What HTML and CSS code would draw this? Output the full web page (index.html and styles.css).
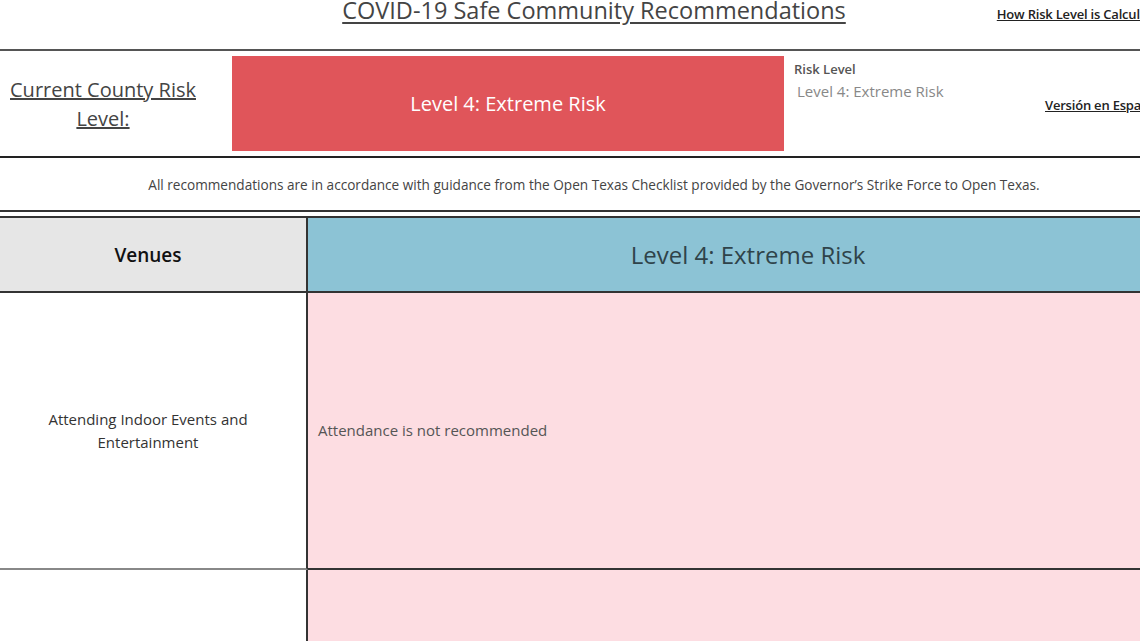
FILE: index.html
```html
<!DOCTYPE html>
<html lang="en">
<head>
  <meta charset="UTF-8" />
  <title>COVID-19 Safe Community Recommendations</title>
  <link rel="stylesheet" href="styles.css">
</head>
<body>
  <div class="dash">
    <div class="top">
      <div></div>
      <h1 class="title">COVID-19 Safe Community Recommendations</h1>
      <div class="top-right"><a href="#" class="small-link">How Risk Level is Calculated</a></div>
    </div>

    <div class="risk-row">
      <div class="risk-label"><a href="#">Current County Risk Level:</a></div>
      <div class="risk-box">Level 4: Extreme Risk</div>
      <div class="risk-info">
        <div class="info-title">Risk Level</div>
        <div class="info-value">Level 4: Extreme Risk</div>
      </div>
      <div class="lang"><a href="#" class="small-link">Versión en Español</a></div>
    </div>

    <p class="note">All recommendations are in accordance with guidance from the Open Texas Checklist provided by the Governor’s Strike Force to Open Texas.</p>

    <div class="table">
      <div class="head venues">Venues</div>
      <div class="head level">Level 4: Extreme Risk</div>

      <div class="cell name">Attending Indoor Events and<br>Entertainment</div>
      <div class="cell rec">Attendance is not recommended</div>

      <div class="cell name"></div>
      <div class="cell rec"></div>
    </div>
  </div>
</body>
</html>
```

FILE: styles.css
```css
* {
  margin: 0;
  padding: 0;
  box-sizing: border-box;
}

body {
  font-family: 'Open Sans', 'Noto Sans', sans-serif;
  background: #fff;
  color: #444;
  overflow: hidden;
}

.dash {
  width: 1188px;
}

.top {
  display: grid;
  grid-template-columns: 1fr auto 1fr;
  height: 51px;
  border-bottom: 2px solid #555;
}

.title {
  font-size: 23.5px;
  font-weight: 400;
  color: #444;
  text-decoration: underline;
  text-underline-offset: 3px;
  line-height: 22px;
  margin-top: -1px;
}

.top-right {
  padding-left: 151px;
  padding-top: 2px;
}

.small-link {
  font-size: 13px;
  font-weight: 600;
  color: #222;
  white-space: nowrap;
  text-decoration: underline;
  letter-spacing: -0.2px;
}

.risk-row {
  display: flex;
  height: 107px;
  border-bottom: 2px solid #222;
}

.risk-label {
  width: 232px;
  display: flex;
  align-items: center;
  justify-content: center;
  text-align: center;
  padding: 0 26px 0 0;
}

.risk-label a {
  font-size: 20px;
  line-height: 29px;
  color: #444;
  text-decoration: underline;
}

.risk-box {
  width: 552px;
  height: 95px;
  margin-top: 5px;
  background: #e0555a;
  color: #fff;
  font-size: 20px;
  display: flex;
  align-items: center;
  justify-content: center;
}

.risk-info {
  width: 261px;
  padding: 9px 0 0 10px;
}

.info-title {
  font-size: 13px;
  font-weight: 600;
  color: #555;
  line-height: 18px;
}

.info-value {
  font-size: 15px;
  color: #888;
  margin-left: 3px;
  line-height: 26px;
}

.lang {
  padding-top: 42px;
}

.note {
  height: 54px;
  font-size: 13.6px;
  color: #444;
  text-align: center;
  line-height: 53px;
  border-bottom: 2px solid #333;
  margin-bottom: 4px;
}

.table {
  display: grid;
  grid-template-columns: 308px 1fr;
  grid-template-rows: 75px 277px 80px;
  border-top: 2px solid #333;
}

.head {
  display: flex;
  align-items: center;
  justify-content: center;
  border-bottom: 2px solid #333;
}

.venues {
  background: #e6e6e6;
  font-size: 19px;
  font-weight: 600;
  color: #111;
  border-right: 2px solid #333;
  padding-right: 10px;
}

.level {
  background: #8cc3d5;
  font-size: 24px;
  color: #2f434a;
}

.cell {
  display: flex;
  align-items: center;
  font-size: 15px;
  line-height: 23px;
}

.name {
  justify-content: center;
  text-align: center;
  color: #333;
  border-right: 2px solid #333;
  border-bottom: 2px solid #888;
  padding-right: 10px;
}

.rec {
  background: #fddde2;
  color: #555;
  padding-left: 10px;
  border-bottom: 2px solid #333;
}
```
